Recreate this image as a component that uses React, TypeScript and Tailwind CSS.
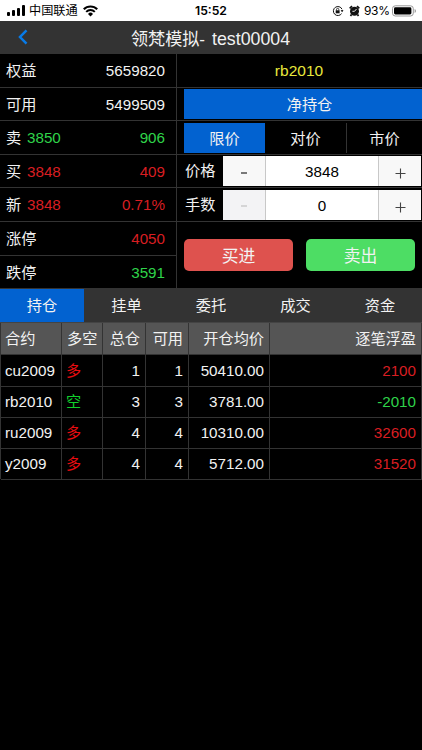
import React from "react";

const RED = "text-[#d81e22]";
const GREEN = "text-[#2fd34a]";

type Quote = { label: string; price?: string; value: string; color: string; h: string };

const quotes: Quote[] = [
  { label: "权益", value: "5659820", color: "text-[#f2f2f2]", h: "h-[34px]" },
  { label: "可用", value: "5499509", color: "text-[#f2f2f2]", h: "h-[33px]" },
  { label: "卖", price: "3850", value: "906", color: GREEN, h: "h-[34px]" },
  { label: "买", price: "3848", value: "409", color: RED, h: "h-[33px]" },
  { label: "新", price: "3848", value: "0.71%", color: RED, h: "h-[34px]" },
  { label: "涨停", value: "4050", color: RED, h: "h-[34px]" },
  { label: "跌停", value: "3591", color: GREEN, h: "h-[33px]" },
];

const positions = [
  { code: "cu2009", side: "多", total: 1, avail: 1, avg: "50410.00", pnl: "2100" },
  { code: "rb2010", side: "空", total: 3, avail: 3, avg: "3781.00", pnl: "-2010" },
  { code: "ru2009", side: "多", total: 4, avail: 4, avg: "10310.00", pnl: "32600" },
  { code: "y2009", side: "多", total: 4, avail: 4, avg: "5712.00", pnl: "31520" },
];

const COLS = "grid grid-cols-[61px_41px_43px_43px_81px_152px]";

function StatusBar() {
  return (
    <div className="flex h-[21px] items-center bg-white text-black">
      <div className="flex h-[11px] w-[18px] ml-[7px] items-end gap-[1.5px]">
        <i className="h-[4px] w-[3.4px] rounded-[1px] bg-black" />
        <i className="h-[6px] w-[3.4px] rounded-[1px] bg-black" />
        <i className="h-[8px] w-[3.4px] rounded-[1px] bg-black" />
        <i className="h-[11px] w-[3.4px] rounded-[1px] bg-black" />
      </div>
      <span className="ml-[4px] w-[50px] whitespace-nowrap text-[12.2px] leading-[20px]">中国联通</span>
      <svg className="ml-[4px]" width="15" height="12" viewBox="0 0 15 12" fill="none" stroke="#000">
        <path d="M.8 4.3A9.4 9.4 0 0 1 14.2 4.3" strokeWidth="2.2" />
        <path d="M3.2 6.9A6 6 0 0 1 11.8 6.9" strokeWidth="2" />
        <path d="M7.5 11.6 5 8.9A3.5 3.5 0 0 1 10 8.9Z" fill="#000" stroke="none" />
      </svg>
      <span className="ml-[97px] w-[34px] whitespace-nowrap text-[12.2px] font-semibold leading-[20px] font-[Inter,sans-serif]">15:52</span>
      <svg className="ml-[103px]" width="12" height="12" viewBox="0 0 12 12" fill="none" stroke="#111">
        <path d="M9.6 8.6A4.5 4.5 0 1 1 10 4.2M10.1 5v1.2" strokeWidth="1" />
        <path d="M8.6 5.2h2.9L10.1 7.2Z" fill="#111" stroke="none" />
        <rect x="3.7" y="5.3" width="3.9" height="3" fill="#111" stroke="none" />
        <path d="M4.5 5.5V4.5a1.15 1.15 0 0 1 2.3 0v1" strokeWidth=".8" />
      </svg>
      <svg className="ml-[5px]" width="11" height="12" viewBox="0 0 11 12">
        <circle cx="5.5" cy="6.2" r="4.5" fill="#111" />
        <path d="M.7 3.4 3 1.2M10.3 3.4 8 1.2M2.5 9.5 1.5 11M8.5 9.5l1 1.5" stroke="#111" strokeWidth="1.7" />
        <path d="M7.5 4 5.5 6.3H3.4" stroke="#fff" strokeWidth=".9" fill="none" />
      </svg>
      <span className="ml-[4px] w-[26px] whitespace-nowrap text-[12px] leading-[20px] font-[Inter,sans-serif] tracking-[-0.35px]">93%</span>
      <svg className="ml-[2px]" width="25" height="12" viewBox="0 0 25 12">
        <rect x=".5" y=".8" width="20.8" height="10.2" rx="2.8" fill="none" stroke="#999" />
        <rect x="2" y="2.3" width="17.4" height="7.2" rx="1.4" fill="#000" />
        <path d="M22.6 4v4q1.4-.7 1.4-2t-1.4-2Z" fill="#999" />
      </svg>
    </div>
  );
}

function Stepper({ value, disabled }: { value: string; disabled?: boolean }) {
  return (
    <div className="flex h-[30px] w-[198px] bg-white text-black">
      <div className={`flex w-[43px] items-center justify-center border-r border-[#c8c8c8] ${disabled ? "bg-[#f3f3f5] text-[#c4c4c4]" : "bg-[#f8f8f8] text-[#333]"}`}>
        <svg width="6" height="2" className="mt-[3px]"><path d="M0 1h6" stroke="currentColor" strokeWidth="1.3" /></svg>
      </div>
      <div className="flex flex-1 items-center justify-center pt-[2px]">{value}</div>
      <div className="flex w-[43px] items-center justify-center border-l border-[#c8c8c8] bg-[#f8f8f8] text-[#444]">
        <svg width="11" height="11" className="mt-[5px]"><path d="M.5 5.5h10M5.5.5v10" stroke="currentColor" strokeWidth="1.1" /></svg>
      </div>
    </div>
  );
}

export default function App() {
  return (
    <div className="h-[750px] w-[422px] overflow-hidden bg-black text-[15.2px] leading-[20px] text-[#f2f2f2] font-['Liberation_Sans','Noto_Sans_CJK_SC',sans-serif]">
      <StatusBar />
      <header className="flex h-[33px] items-center bg-[#333]">
        <svg className="ml-[18px] mb-px" width="10" height="16" viewBox="0 0 10 16" fill="none">
          <path d="M8.5 1.3 2 8l6.5 6.7" stroke="#087be8" strokeWidth="2.5" />
        </svg>
        <h1 className="ml-[103px] flex whitespace-nowrap pt-[4px] leading-[24px]">
          <span className="w-[81px] text-[17.1px]">领梵模拟-</span>
          <span className="-mt-px text-[17.8px]">test00004</span>
        </h1>
      </header>

      <main className="flex h-[235px]">
        <section className="w-[177px] border-r border-[#333]">
          {quotes.map((q) => (
            <div key={q.label} className={`flex items-center border-b border-[#333] pl-[6px] pr-[11px] pt-px ${q.h}`}>
              <span className={q.price ? "w-[21px]" : "w-[60px]"}>{q.label}</span>
              {q.price && <span className={q.color}>{q.price}</span>}
              <span className={`ml-auto ${q.color}`}>{q.value}</span>
            </div>
          ))}
        </section>

        <section className="flex-1">
          <div className="flex h-[34px] items-center justify-center border-b border-[#333] pt-px pr-px text-[15.5px] text-[#e8e83c]">rb2010</div>
          <div className="h-[33px] border-b border-[#333] pl-[7px] pt-px">
            <div className="flex h-[30px] items-center justify-center bg-[#0262d0] pt-px pl-[13px]">净持仓</div>
          </div>
          <div className="h-[34px] border-b border-[#333] pl-[7px] pt-[2px]">
            <div className="flex h-[30px] text-center leading-[31px]">
              <div className="w-[81px] bg-[#0262d0]">限价</div>
              <div className="w-[82px] border-r border-[#333]">对价</div>
              <div className="w-[75px]">市价</div>
            </div>
          </div>
          <div className="flex h-[33px] items-center border-b border-[#333] pl-[8px]">
            <span className="w-[38px]">价格</span>
            <Stepper value="3848" />
          </div>
          <div className="flex h-[34px] items-center border-b border-[#333] pl-[8px]">
            <span className="w-[38px]">手数</span>
            <Stepper value="0" disabled />
          </div>
          <div className="flex h-[67px] gap-[13px] border-b border-[#333] pl-[7px] pt-[17px] text-[16.8px]">
            <button className="h-[32px] w-[109px] rounded-[5px] bg-[#de524e] pt-[3px]">买进</button>
            <button className="h-[32px] w-[109px] rounded-[5px] bg-[#4ddd64] pt-[3px]">卖出</button>
          </div>
        </section>
      </main>

      <nav className="grid h-[34px] grid-cols-[84px_85px_84px_85px_84px] border-b border-[#444] bg-[#333] text-center leading-[33px]">
        <div className="bg-[#0262d0]">持仓</div>
        <div>挂单</div>
        <div>委托</div>
        <div>成交</div>
        <div>资金</div>
      </nav>

      <section className="border-l border-[#333]">
        <div className={`${COLS} h-[32px] bg-[#555] text-right leading-[31px] *:border-b *:border-r *:border-[#333] *:pr-[5px]`}>
          <div className="pl-[4px] text-left">合约</div>
          <div className="whitespace-nowrap pl-[5px] !pr-0 text-left">多空</div>
          <div>总仓</div>
          <div>可用</div>
          <div>开仓均价</div>
          <div>逐笔浮盈</div>
        </div>
        {positions.map((p) => {
          const tone = p.side === "多" ? RED : GREEN;
          return (
            <div key={p.code} className={`${COLS} h-[31px] text-right leading-[31px] *:border-b *:border-r *:border-[#333] *:pr-[5px]`}>
              <div className="pl-[4px] text-left">{p.code}</div>
              <div className={`pl-[4px] text-left ${p.side === "多" ? "text-[#e80c10]" : "text-[#10d02c]"}`}>{p.side}</div>
              <div>{p.total}</div>
              <div>{p.avail}</div>
              <div>{p.avg}</div>
              <div className={tone}>{p.pnl}</div>
            </div>
          );
        })}
      </section>
    </div>
  );
}
